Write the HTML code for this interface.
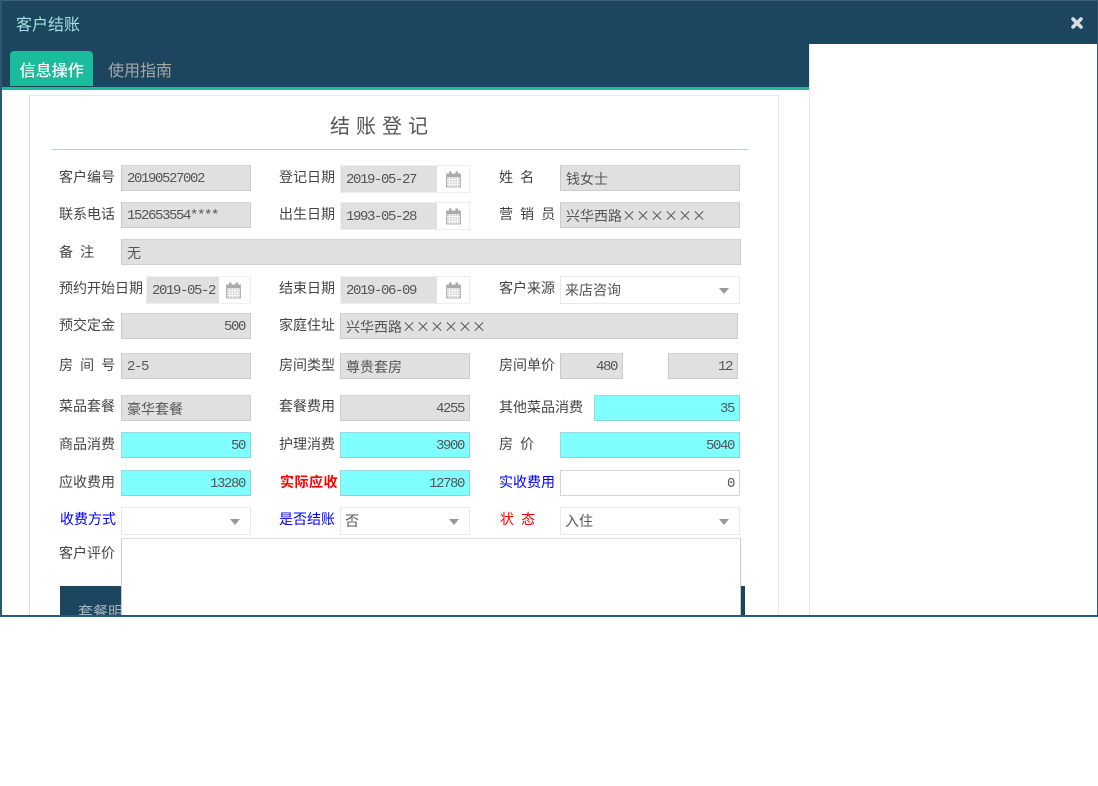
<!DOCTYPE html>
<html><head><meta charset="utf-8">
<style>
html,body{margin:0;padding:0;width:1098px;height:786px;overflow:hidden;background:#fff;}
body{font-family:"WenQuanYi Zen Hei","Noto Sans CJK SC",sans-serif;font-size:14px;color:#555;}
#m{position:absolute;left:0;top:0;width:1098px;height:617px;background:#1c4660;box-sizing:border-box;border-top:1px solid #3a6078;overflow:hidden;}
#c{position:absolute;left:2px;top:44px;width:1095px;height:571px;background:#fff;overflow:hidden;}
#hdr{position:absolute;left:0;top:1px;width:809px;height:87px;background:#1c4660;}
#line{position:absolute;left:2px;top:87px;width:807px;height:3px;background:#1abc9c;}
#l2{position:absolute;left:809px;top:44px;width:1px;height:572px;background:#e7e7e7;}
#t{position:absolute;left:16px;top:13px;font-size:16px;color:#9fe3dc;line-height:20px;}
#x{position:absolute;left:1070px;top:16px;}
#tab1{position:absolute;left:10px;top:51px;width:83px;height:35px;background:#1abc9c;border-radius:4px 4px 0 0;color:#fff;font-size:16px;text-shadow:.4px 0 0 #fff;text-align:center;line-height:37px;}
#tab2{position:absolute;left:108px;top:51px;color:#a6a6a6;font-size:16px;line-height:37px;}
#p{position:absolute;left:29px;top:95px;width:750px;height:530px;border:1px solid #e7e7e7;box-sizing:border-box;border-left-color:#ddd;}
#h{position:absolute;left:330px;top:111px;font-size:20px;line-height:28px;letter-spacing:6px;color:#555;white-space:nowrap;}
#hr{position:absolute;left:52px;top:149px;width:696px;height:1px;background:#c3ccd3;}
.l{position:absolute;line-height:21px;color:#444;font-size:14px;white-space:pre;word-spacing:4px;}
.f{position:absolute;box-sizing:border-box;height:26px;background:#e0e0e0;border:1px solid #ccc;border-top-color:#d4d4d4;border-left-color:#c8c8c8;line-height:26px;padding:0 5px;font-size:14px;color:#555;white-space:nowrap;overflow:hidden;}
.n{font-family:"Liberation Mono",monospace;font-size:14px;letter-spacing:-1.4px;line-height:27px;}
.r{text-align:right;}
.cy{background:#7fffff;border-color:#9adada;border-bottom-color:#8ad4d4;border-right-color:#8ad4d4;}
.w{background:#fff;border-color:#d4d4d4;}
.d{position:absolute;box-sizing:border-box;height:28px;border:1px solid #eee;background:#fff;}
.d .i{position:absolute;left:0;top:0;bottom:0;background:#e0e0e0;line-height:28px;padding-left:5px;overflow:hidden;white-space:nowrap;font-family:"Liberation Mono",monospace;font-size:14px;letter-spacing:-1.4px;color:#555;box-sizing:border-box;}
.d svg{position:absolute;top:5px;}
.s{position:absolute;box-sizing:border-box;height:28px;border:1px solid #e9e9e9;background:#fff;line-height:27px;padding-left:4px;color:#555;}
.s:after{content:"";position:absolute;right:10px;top:11px;border-left:5px solid transparent;border-right:5px solid transparent;border-top:6px solid #999;}
#ta{position:absolute;left:121px;top:538px;width:620px;height:90px;box-sizing:border-box;background:#fff;border:1px solid #ccc;border-top-color:#ddd;}
#pn{position:absolute;left:60px;top:586px;width:685px;height:40px;background:#1c4660;color:#a6b5bf;font-size:15px;line-height:52px;padding-left:18px;box-sizing:border-box;}
#clip{position:absolute;left:0;top:0;width:1098px;height:615px;overflow:hidden;}
</style></head>
<body>
<div id="m"></div>
<div id="c"></div>
<div id="clip">
<div id="hdr"></div>
<div id="line"></div>
<div id="l2"></div>
<div id="t">客户结账</div>
<svg id="x" width="14" height="14" viewBox="0 0 14 14"><path d="M3 3L11 11M11 3L3 11" stroke="#d5dde2" stroke-width="3.6" stroke-linecap="round"/></svg>
<div id="tab1">信息操作</div>
<div id="tab2">使用指南</div>
<div id="p"></div>
<div id="h">结账登记</div>
<div id="hr"></div>

<svg width="0" height="0" style="position:absolute"><defs><g id="cal"><rect x="0.5" y="3" width="14" height="13" fill="#d4d4d4" stroke="#b4b4b4"/><rect x="1" y="3" width="13" height="3" fill="#aaa"/><rect x="3" y="0.5" width="2.5" height="4" fill="#aaa"/><rect x="9.5" y="0.5" width="2.5" height="4" fill="#aaa"/><path d="M1 8.5H14M1 11H14M1 13.5H14M3.5 6V16M6.2 6V16M8.9 6V16M11.6 6V16" stroke="#fff" stroke-width="0.8"/></g></defs></svg>

<div class="l" style="left:59px;top:167px">客户编号</div>
<div class="f n" style="left:121px;top:165px;width:130px">20190527002</div>
<div class="l" style="left:279px;top:167px">登记日期</div>
<div class="d" style="left:340px;top:165px;width:130px"><div class="i" style="width:96px">2019-05-27</div><svg style="left:105px" width="15" height="17"><use href="#cal"/></svg></div>
<div class="l" style="left:499px;top:167px">姓 名</div>
<div class="f" style="left:560px;top:165px;width:180px">钱女士</div>

<div class="l" style="left:59px;top:204px">联系电话</div>
<div class="f n" style="left:121px;top:202px;width:130px">152653554****</div>
<div class="l" style="left:279px;top:204px">出生日期</div>
<div class="d" style="left:340px;top:202px;width:130px"><div class="i" style="width:96px">1993-05-28</div><svg style="left:105px" width="15" height="17"><use href="#cal"/></svg></div>
<div class="l" style="left:499px;top:204px">营 销 员</div>
<div class="f" style="left:560px;top:202px;width:180px">兴华西路××××××</div>

<div class="l" style="left:59px;top:242px">备 注</div>
<div class="f" style="left:121px;top:239px;width:620px">无</div>

<div class="l" style="left:59px;top:278px">预约开始日期</div>
<div class="d" style="left:146px;top:276px;width:105px"><div class="i" style="width:72px">2019-05-2</div><svg style="left:79px" width="15" height="17"><use href="#cal"/></svg></div>
<div class="l" style="left:279px;top:278px">结束日期</div>
<div class="d" style="left:340px;top:276px;width:130px"><div class="i" style="width:96px">2019-06-09</div><svg style="left:105px" width="15" height="17"><use href="#cal"/></svg></div>
<div class="l" style="left:499px;top:278px">客户来源</div>
<div class="s" style="left:560px;top:276px;width:180px">来店咨询</div>

<div class="l" style="left:59px;top:315px">预交定金</div>
<div class="f r n" style="left:121px;top:313px;width:130px">500</div>
<div class="l" style="left:279px;top:315px">家庭住址</div>
<div class="f" style="left:340px;top:313px;width:398px">兴华西路××××××</div>

<div class="l" style="left:59px;top:355px">房 间 号</div>
<div class="f n" style="left:121px;top:353px;width:130px">2-5</div>
<div class="l" style="left:279px;top:355px">房间类型</div>
<div class="f" style="left:340px;top:353px;width:130px">尊贵套房</div>
<div class="l" style="left:499px;top:355px">房间单价</div>
<div class="f r n" style="left:560px;top:353px;width:63px">480</div>
<div class="f r n" style="left:668px;top:353px;width:70px">12</div>

<div class="l" style="left:59px;top:396px">菜品套餐</div>
<div class="f" style="left:121px;top:395px;width:130px">豪华套餐</div>
<div class="l" style="left:279px;top:396px">套餐费用</div>
<div class="f r n" style="left:340px;top:395px;width:130px">4255</div>
<div class="l" style="left:499px;top:397px">其他菜品消费</div>
<div class="f r n cy" style="left:594px;top:395px;width:146px">35</div>

<div class="l" style="left:59px;top:434px">商品消费</div>
<div class="f r n cy" style="left:121px;top:432px;width:130px">50</div>
<div class="l" style="left:279px;top:434px">护理消费</div>
<div class="f r n cy" style="left:340px;top:432px;width:130px">3900</div>
<div class="l" style="left:499px;top:434px">房 价</div>
<div class="f r n cy" style="left:560px;top:432px;width:180px">5040</div>

<div class="l" style="left:59px;top:472px">应收费用</div>
<div class="f r n cy" style="left:121px;top:470px;width:130px">13280</div>
<div class="l" style="left:280px;top:472px;color:#f00;font-weight:bold;letter-spacing:.5px">实际应收</div>
<div class="f r n cy" style="left:340px;top:470px;width:130px">12780</div>
<div class="l" style="left:499px;top:472px;color:#00f">实收费用</div>
<div class="f r n w" style="left:560px;top:470px;width:180px">0</div>

<div class="l" style="left:60px;top:509px;color:#00f">收费方式</div>
<div class="s" style="left:121px;top:507px;width:130px"></div>
<div class="l" style="left:279px;top:509px;color:#00f">是否结账</div>
<div class="s" style="left:340px;top:507px;width:130px">否</div>
<div class="l" style="left:500px;top:509px;color:#f00">状 态</div>
<div class="s" style="left:560px;top:507px;width:180px">入住</div>

<div class="l" style="left:59px;top:543px">客户评价</div>
<div id="pn">套餐明细</div>
<div id="ta"></div>
</div>
<div style="position:absolute;left:0;top:0;width:2px;height:617px;background:#2b5873"></div>
<div style="position:absolute;left:1097px;top:0;width:1px;height:617px;background:#2b5873"></div>
<div style="position:absolute;left:0;top:615px;width:1098px;height:2px;background:#2b5873"></div>
</body></html>
